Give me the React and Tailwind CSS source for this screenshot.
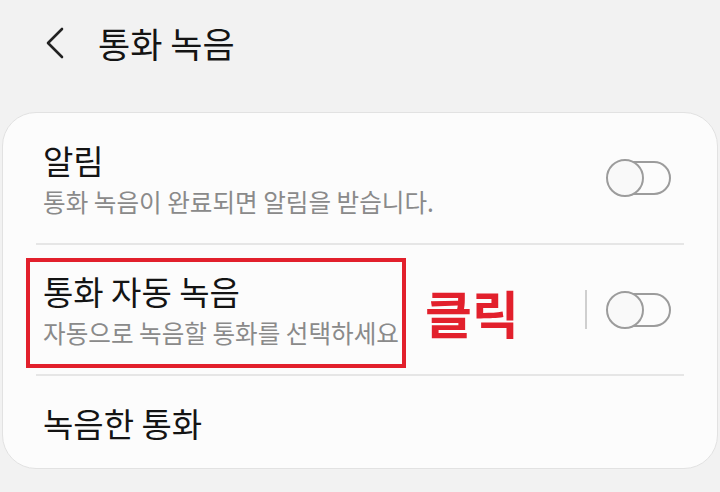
import React from 'react';

const font = { fontFamily: '"Noto Sans CJK KR", "Noto Sans", sans-serif' };

function Toggle() {
    return (
        <div className="relative w-[65px] h-[38px] shrink-0">
            <div className="absolute left-[5px] top-[2px] w-[60px] h-[34px] rounded-full border-2 border-[#9c9c9c] bg-[#fcfcfc]" />
            <div className="absolute left-0 top-0 w-[38px] h-[38px] rounded-full border-2 border-[#9c9c9c] bg-[#f9f9f9]" />
        </div>
    );
}

function Divider() {
    return <div className="mx-[33px] h-[2px] bg-[#e6e6e6]" />;
}

export default function App() {
    return (
        <div className="relative w-[720px] h-[492px] bg-[#f2f2f2] overflow-hidden" style={font}>
            {/* Header */}
            <div className="h-[86px] flex items-center pl-[46px]">
                <svg width="18" height="32" viewBox="0 0 18 32" fill="none">
                    <polyline points="16,2 2,16 16,30" stroke="#222" strokeWidth="2.6" strokeLinecap="round" strokeLinejoin="round" />
                </svg>
                <h1 className="ml-[34px] text-[35px] leading-none text-[#141414] -mt-[1px]">통화 녹음</h1>
            </div>

            {/* Card */}
            <div className="mt-[26px] ml-[2px] w-[716px] h-[357px] rounded-[34px] border border-[#e2e2e2] bg-[#fcfcfc] overflow-hidden">
                <div className="h-[130px] flex items-center pl-[40px] pr-[46px]">
                    <div className="flex-1 flex flex-col gap-[7px]">
                        <div className="text-[33px] leading-[38px] text-[#141414]">알림</div>
                        <div className="text-[24.6px] leading-[30px] text-[#8a8a8a]">통화 녹음이 완료되면 알림을 받습니다.</div>
                    </div>
                    <Toggle />
                </div>
                <Divider />
                <div className="h-[129px] flex items-center pl-[40px] pr-[46px]">
                    <div className="flex-1 flex flex-col gap-[7px]">
                        <div className="text-[33px] leading-[38px] text-[#141414]">통화 자동 녹음</div>
                        <div className="text-[24.6px] leading-[30px] text-[#8a8a8a]">자동으로 녹음할 통화를 선택하세요</div>
                    </div>
                    <div className="w-[2px] h-[39px] bg-[#cfcfcf] mr-[19px]" />
                    <Toggle />
                </div>
                <Divider />
                <div className="h-[93px] flex items-center pl-[40px]">
                    <div className="text-[33px] leading-[38px] text-[#141414]">녹음한 통화</div>
                </div>
            </div>

            {/* Annotation overlay */}
            <div className="absolute left-[26px] top-[258px] w-[380px] h-[110px] border-[4px] border-[#e2202c]" />
            <div className="absolute left-[425px] top-[287px] text-[51px] leading-none font-bold text-[#e2202c]">클릭</div>
        </div>
    );
}
